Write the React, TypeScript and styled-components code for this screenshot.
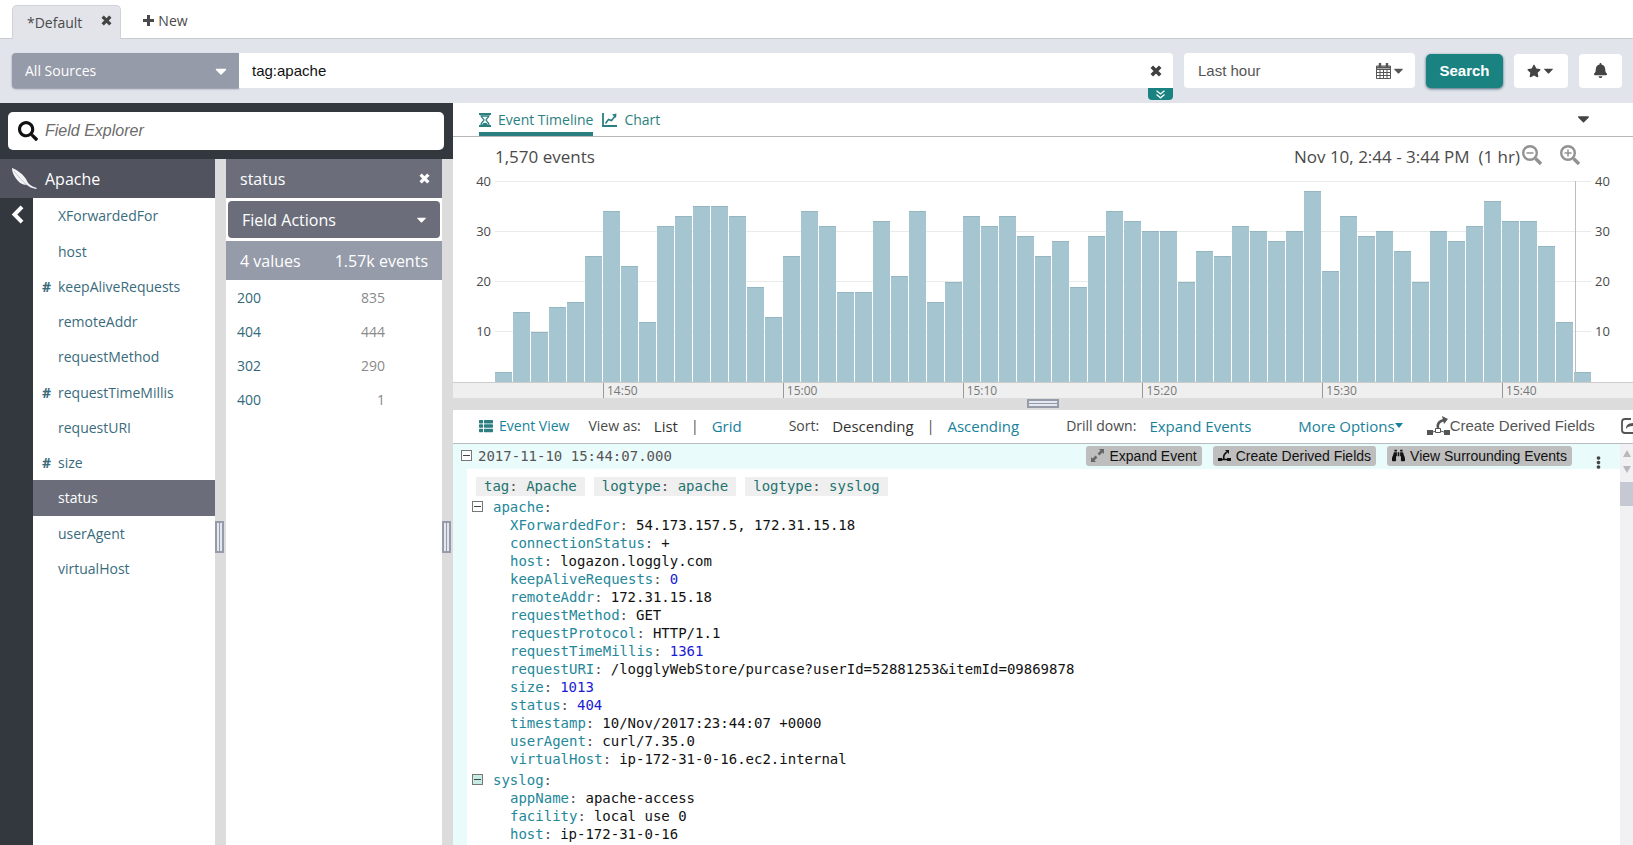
import React from "react";
import styled, { createGlobalStyle, css } from "styled-components";
import {
  FaCaretDown, FaSearch, FaStar, FaBell, FaThList, FaBinoculars, FaEllipsisV,
} from "react-icons/fa";

const Global = createGlobalStyle`
  *, *::before, *::after { box-sizing: border-box; }
  html, body, #root { height: 100%; }
  body { margin: 0; background: #fff; overflow: hidden; }
  body, button, input, select { font-family: "Open Sans", "Noto Sans", sans-serif; font-size: 14px; color: #4a4a4a; }
  button, input, select { margin: 0; padding: 0; border: 0; background: none; }
  ul, dl, dd, h2 { margin: 0; padding: 0; list-style: none; font-weight: 400; }
  a { text-decoration: none; color: inherit; }
  svg { display: block; flex: none; }
`;

const helv = css`font-family: "Liberation Sans", Arial, sans-serif;`;
const mono = css`font-family: "DejaVu Sans Mono", monospace;`;

const Page = styled.div`display: flex; flex-direction: column; height: 100vh; overflow: hidden;`;

/* Tabs and search bar */
const TabBar = styled.nav`
  display: flex; align-items: flex-end; height: 39px; flex: none; padding-left: 12px; gap: 22px; border-bottom: 1px solid #c9cbcf;
`;
const Tab = styled.div`
  display: flex; align-items: center; gap: 19px; height: 34px; margin-bottom: -1px; padding: 0 8px 0 14px;
  background: #e2e4ea; border: 1px solid #d0d2d8; border-bottom: 0; border-radius: 5px 5px 0 0;
`;
const TabClose = styled.button`padding-bottom: 4px; color: #444;`;
const NewTab = styled.button`display: flex; align-items: center; gap: 4px; height: 34px; padding-bottom: 2px;`;

const SearchBar = styled.form`
  display: flex; align-items: center; height: 64px; flex: none; padding: 0 11px 1px 12px; background: #e1e4eb;
`;
const SourceWrap = styled.div`display: flex; align-items: center; position: relative; width: 227px; height: 35px; flex: none; color: #fff;`;
const SourceSelect = styled.select`
  appearance: none; width: 100%; height: 100%; padding: 0 13px; color: #fff; background: #959ba8;
  border-radius: 4px 0 0 4px; box-shadow: 0 1px 2px #8a8f9b;
`;
const SelectCaret = styled.span`position: absolute; right: 9px; font-size: 18px; pointer-events: none;`;
const QueryBox = styled.div`
  position: relative; display: flex; align-items: center; flex: 1; height: 35px; padding-right: 11px; background: #fff; border-radius: 0 4px 0 0;
`;
const QueryInput = styled.input`${helv} flex: 1; height: 100%; padding-left: 13px; font-size: 15px; color: #111; outline: 0;`;
const ClearButton = styled.button`color: #3f3f3f;`;
const ExpandToggle = styled.button`
  position: absolute; right: 0; top: 100%; width: 25px; height: 12px; display: grid; place-items: center;
  background: #1a8280; border-radius: 0 0 4px 4px;
`;
const TimeRange = styled.button`
  ${helv} display: flex; align-items: center; width: 231px; height: 35px; margin-left: 11px; padding: 0 9px 0 14px;
  background: #fff; border-radius: 4px; font-size: 15px; color: #555;
`;
const Grow = styled.span`flex: 1; text-align: left;`;
const SearchButton = styled.button`
  ${helv} width: 77px; height: 34px; margin-left: 11px; border-radius: 5px; background: #1a8280; color: #fff;
  font-size: 15px; font-weight: 700; box-shadow: 0 1px 3px #467;
`;
const IconButton = styled.button<{ $w: number }>`
  display: flex; align-items: center; justify-content: center; width: ${(p) => p.$w}px; height: 34px;
  margin-left: 11px; border-radius: 4px; background: #fff; color: #444;
`;

/* Left: field explorer */
const Main = styled.div`display: flex; flex: 1; min-height: 0;`;
const Explorer = styled.aside`display: flex; flex-direction: column; width: 453px; flex: none; background: #dcdcdc;`;
const ExplorerTop = styled.div`height: 56px; flex: none; padding: 9px 9px 9px 8px; background: #33373e;`;
const ExplorerSearch = styled.label`
  display: flex; align-items: center; gap: 7px; height: 38px; padding-left: 10px; background: #fff; border-radius: 5px; color: #111; font-size: 20px;
`;
const ExplorerInput = styled.input`${helv} flex: 1; font-size: 16px; font-style: italic; outline: 0; &::placeholder { color: #6c6c6c; }`;
const Columns = styled.div`display: flex; flex: 1; min-height: 0;`;
const FieldColumn = styled.div`display: flex; flex-direction: column; width: 215px;`;
const GroupTitle = styled.h2<{ $bg: string; $pad: string }>`
  display: flex; align-items: center; justify-content: space-between; height: 39px; flex: none;
  padding: ${(p) => p.$pad}; background: ${(p) => p.$bg}; color: #fff; font-size: 16px; line-height: 22px;
`;
const GroupName = styled.span`display: flex; align-items: center; gap: 7px;`;
const CloseButton = styled.button`color: #fff;`;
const FieldBody = styled.div`display: flex; flex: 1; background: #fff;`;
const Rail = styled.div`width: 33px; padding: 7px 0 0 11px; background: #33373e;`;
const BackButton = styled.button`color: #fff;`;
const FieldList = styled.ul`flex: 1;`;
const FieldItem = styled.li<{ $on?: boolean }>`
  height: 35px; background: ${(p) => (p.$on ? "#6b6e7a" : "none")}; color: ${(p) => (p.$on ? "#fff" : "#3a6b7c")};
  &:nth-child(4n + 1) { height: 36px; }
`;
const FieldLink = styled.a`display: flex; align-items: center; height: 100%; line-height: 20px;`;
const Hash = styled.span`width: 25px; padding-left: 9px; font-weight: 700;`;
const VSplit = styled.div`display: flex; flex-direction: column; justify-content: center; width: 11px; padding-top: 70px;`;
const Grip = styled.span<{ $flat?: boolean }>`
  width: ${(p) => (p.$flat ? 32 : 9)}px; height: ${(p) => (p.$flat ? 9 : 32)}px;
  border: 2px solid #959ba8; background: #e4e7f0;
  display: grid; place-items: center;
  &::after { content: ""; background: #959ba8; ${(p) => (p.$flat ? "width: 100%; height: 1px;" : "width: 1px; height: 28px;")} }
`;
const ValueColumn = styled.div`width: 216px; display: flex; flex-direction: column; background: #fff;`;
const ActionsButton = styled.button`
  display: flex; align-items: center; justify-content: space-between; height: 37px; flex: none; margin: 3px 2px;
  padding: 0 11px 0 14px; border-radius: 4px; background: #6b6e7a; color: #fff; font-size: 16px;
`;
const Summary = styled.div`
  display: flex; align-items: center; justify-content: space-between; height: 39px; flex: none; padding: 0 14px;
  background: #959ba8; color: #fff; font-size: 16px; white-space: nowrap;
`;
const ValueTable = styled.table`
  width: 100%; margin-top: 1px; border-collapse: collapse;
  td { height: 34px; padding: 0 57px 0 11px; color: #8a8a8a; text-align: right; line-height: 20px; }
  td:first-child { padding-right: 0; text-align: left; color: #33697c; }
`;

/* Right: chart and events */
const Content = styled.main`display: flex; flex-direction: column; flex: 1; min-width: 0;`;
const ViewTabs = styled.div`
  display: flex; align-items: stretch; height: 34px; flex: none; padding: 0 40px 0 26px; gap: 9px; border-bottom: 1px solid #b4b8bb;
`;
const ViewTab = styled.button<{ $on?: boolean }>`
  display: flex; align-items: center; gap: 7px; padding-top: 4px; color: #2b7f80; border-bottom: 4px solid ${(p) => (p.$on ? "#2b7f80" : "transparent")};
`;
const CollapseButton = styled.button`margin-left: auto; padding-bottom: 2px; color: #444; svg { font-size: 19px; }`;
const ChartHead = styled.div`
  display: flex; align-items: center; justify-content: space-between; height: 44px; flex: none; padding: 0 53px 6px 42px; font-size: 17px; color: #4a4a4a;
`;
const RangeInfo = styled.div`display: flex; align-items: center; gap: 18px;`;
const RangeText = styled.span`margin-right: -16px; white-space: pre;`;
const ZoomButton = styled.button`color: #929292; padding-bottom: 2px;`;
const ChartRow = styled.div`display: flex; height: 201px; flex: none;`;
const Axis = styled.div<{ $right?: boolean }>`
  display: flex; flex-direction: column; justify-content: space-between; width: 42px; height: 168px; margin-top: -9px;
  font-size: 13px; line-height: 18px; text-align: ${(p) => (p.$right ? "left" : "right")}; padding: ${(p) => (p.$right ? "0 0 0 4px" : "0 4px 0 0")};
`;
const Plot = styled.div`
  flex: 1; position: relative; display: grid; grid-template-columns: repeat(61, 1fr); column-gap: 1px; align-items: end;
  background: repeating-linear-gradient(to bottom, #e9ebeb 0 1px, #fff 1px 50px);
`;
const Bar = styled.div`background: #a5c5d1; border-top: 1px solid #94b6c0;`;
const NowLine = styled.div`position: absolute; top: 0; bottom: 0; right: 15px; width: 1px; background: #bdbdbd;`;
const TimeAxis = styled.div`
  display: grid; grid-template-columns: 108px repeat(5, 180fr) 89fr 42px; height: 16px; flex: none; padding-left: 42px;
  border-top: 1px solid #ccc; background: #efefef; font-size: 12px; line-height: 16px; color: #777;
`;
const Tick = styled.span`border-left: 1px solid #999; padding-left: 3px;`;
const HSplit = styled.div`display: flex; align-items: center; justify-content: center; height: 12px; flex: none; padding-bottom: 1px; background: #dcdcdc;`;
const EventBar = styled.div`
  display: flex; align-items: center; height: 34px; flex: none; padding: 0 0 2px 26px; border-bottom: 1px solid #b6bcc0; white-space: nowrap; overflow: hidden;
`;
const ViewTitle = styled.a`display: flex; align-items: center; gap: 6px; color: #17829a; svg { color: #2b7f80; }`;
const EventItem = styled.span<{ $ml: number }>`margin-left: ${(p) => p.$ml}px;`;
const EventLink = styled.a<{ $ml: number; $dark?: boolean }>`
  margin-left: ${(p) => p.$ml}px; font-size: 15px; color: ${(p) => (p.$dark ? "#333" : "#17829a")};
`;
const OptionsButton = styled.button`display: flex; align-items: center; margin-left: 47px; font-size: 15px; color: #17829a;`;
const DerivedButton = styled.button<{ $ml: number }>`${helv} display: flex; align-items: center; margin-left: ${(p) => p.$ml}px; font-size: 15px; color: #555;`;

const EventsArea = styled.div`display: flex; flex: 1; min-height: 0;`;
const Events = styled.section`flex: 1; min-width: 0; padding-left: 14px; background: #eafbfb; overflow: hidden;`;
const EventHead = styled.div`display: flex; align-items: center; height: 25px; gap: 6px; margin-left: -6px; padding: 0 14px 2px 0; ${mono}`;
const Stamp = styled.span`flex: 1; color: #555; font-size: 14px;`;
const ActionButton = styled.button`
  ${helv} display: flex; align-items: center; gap: 5px; height: 20px; margin-right: 5px; padding: 0 5px;
  background: #bebebe; border-radius: 3px; font-size: 14px; color: #111;
`;
const MenuButton = styled.button`display: grid; place-items: center; width: 16px; margin: 14px 0 0 7px; color: #444; svg { font-size: 13px; }`;
const EventBody = styled.div`height: 100%; padding: 6px 0 0 5px; background: #fff; ${mono} font-size: 14px; line-height: 18px;`;
const Tags = styled.div`display: flex; gap: 9px; padding: 2px 0 1px 4px;`;
const TagChip = styled.span`height: 19px; padding: 0 8px; background: #efefef; color: #24736f;`;
const GroupLine = styled.div`display: flex; align-items: center; gap: 10px; height: 19px; color: #24889a;`;
const ToggleButton = styled.button`width: 11px; height: 11px; flex: none;`;
const Fields = styled.dl`padding: 0 0 2px 38px;`;
const Field = styled.div`display: flex; gap: 8px; white-space: nowrap;`;
const Key = styled.dt`color: #24889a;`;
const Colon = styled.span`color: #555;`;
const Value = styled.dd<{ $num?: boolean }>`color: ${(p) => (p.$num ? "#1a1ad6" : "#111")};`;
const ScrollTrack = styled.div`
  display: flex; flex-direction: column; align-items: center; width: 13px; gap: 9px; padding-top: 6px; background: #f1f1f4;
`;
const Thumb = styled.div`width: 100%; height: 24px; background: #c6c9d3;`;

const bars = [2,14,10,15,16,25,34,23,12,31,33,35,35,33,19,13,25,34,31,18,18,32,21,34,16,20,33,31,33,29,25,28,19,29,34,32,30,30,20,26,25,31,30,28,30,38,22,33,29,30,26,20,30,28,31,36,32,32,27,12,2];
const ticks = ["14:50", "15:00", "15:10", "15:20", "15:30", "15:40"];
const levels = [40, 30, 20, 10];
const fields = ["XForwardedFor", "host", "#keepAliveRequests", "remoteAddr", "requestMethod", "#requestTimeMillis", "requestURI", "#size", "status", "userAgent", "virtualHost"];
const values = [["200", "835"], ["404", "444"], ["302", "290"], ["400", "1"]];
const apache: [string, string][] = [
  ["XForwardedFor", "54.173.157.5, 172.31.15.18"], ["connectionStatus", "+"], ["host", "logazon.loggly.com"],
  ["keepAliveRequests", "0"], ["remoteAddr", "172.31.15.18"], ["requestMethod", "GET"], ["requestProtocol", "HTTP/1.1"],
  ["requestTimeMillis", "1361"], ["requestURI", "/logglyWebStore/purcase?userId=52881253&itemId=09869878"],
  ["size", "1013"], ["status", "404"], ["timestamp", "10/Nov/2017:23:44:07 +0000"], ["userAgent", "curl/7.35.0"],
  ["virtualHost", "ip-172-31-0-16.ec2.internal"],
];
const syslog: [string, string][] = [["appName", "apache-access"], ["facility", "local use 0"], ["host", "ip-172-31-0-16"]];

const Cross = ({ size = 12 }: { size?: number }) => (
  <svg width={size} height={size} viewBox="0 0 12 12" fill="none" stroke="currentColor" strokeWidth="3.600"><path d="M1.800 1.800l8.400 8.400M10.200 1.800l-8.400 8.400" /></svg>
);
const Plus = () => (
  <svg width="11" height="11" viewBox="0 0 11 11" fill="none" stroke="currentColor" strokeWidth="3"><path d="M5.500 0v11M0 5.500h11" /></svg>
);
const Back = () => (
  <svg width="13" height="19" viewBox="0 0 13 19" fill="none" stroke="currentColor" strokeWidth="4"><path d="M11 1.800L3.500 9.500l7.500 7.700" /></svg>
);
const Minus = ({ tint }: { tint?: boolean }) => (
  <svg width="11" height="11" viewBox="0 0 11 11"><rect x=".5" y=".5" width="10" height="10" fill={tint ? "#c5ebe2" : "#fff"} stroke="#777" /><path d="M2 5.500h7" stroke="#444" /></svg>
);
const Feather = () => (
  <svg width="27" height="24" viewBox="0 0 27 24"><path d="M1 1C6 3 12 7 15 12c1 2 2 4 3 5 2 2 5 3 8 4l-1 1c-4-1-7-2-9-4-5 0-9-3-12-8C2 7 1 4 1 1Z" fill="#f4f4f8" /><path d="M3 4c4 5 8 10 13 14" stroke="#b5b7c2" strokeWidth=".8" fill="none" /></svg>
);
const Magnifier = ({ plus }: { plus?: boolean }) => (
  <svg width="20" height="20" viewBox="0 0 20 20" fill="none" stroke="currentColor"><circle cx="8" cy="8" r="6.800" strokeWidth="2.400" /><path d="M13.500 13.500l5.500 5.500" strokeWidth="3.400" /><path d={plus ? "M4.500 8h7M8 4.500v7" : "M4.500 8h7"} strokeWidth="1.500" /></svg>
);
const Hourglass = () => (
  <svg width="12" height="14" viewBox="0 0 12 14" fill="none" stroke="currentColor"><path d="M0 1h12M0 13h12" strokeWidth="2" /><path d="M2 2c0 3 3 4 3 5s-3 2-3 5M10 2c0 3-3 4-3 5s3 2 3 5M3 3h6" strokeWidth="1.300" /><path d="M3 12c1-3 5-3 6 0Z" fill="currentColor" stroke="none" /></svg>
);
const LineChart = () => (
  <svg width="15" height="14" viewBox="0 0 15 14" fill="none" stroke="currentColor"><path d="M1 0v13h14" strokeWidth="1.800" /><path d="M3.500 10.500l3-4 3 1 4-5" strokeWidth="1.600" /><path d="M10 1.500l4.500-1-.5 4.500Z" fill="currentColor" stroke="none" /></svg>
);
const Calendar = () => (
  <svg width="15" height="16" viewBox="0 0 15 16" fill="none" stroke="currentColor"><path d="M.5 3h14v12.500H.5ZM.5 6.500h14M.5 9.500h14M.5 12.500h14M4 6v9M7.500 6v9M11 6v9" /><path d="M1 4.500h13" strokeWidth="2" /><path d="M4 0v4M11 0v4" strokeWidth="2.400" /></svg>
);
const Chevrons = () => (
  <svg width="9" height="9" viewBox="0 0 9 9" fill="none" stroke="#fff" strokeWidth="1.300"><path d="M.5.800l4 3.200 4-3.200M.5 4.600l4 3.200 4-3.200" /></svg>
);
const Derive = () => (
  <svg width="23" height="20" viewBox="0 0 23 20"><path d="M0 14h6v5H0ZM17 14h6v5h-6Z" fill="currentColor" /><path d="M8.500 12.500h5v4h-5ZM6 16l2.500-1M13.500 15l3.500 1" fill="none" stroke="currentColor" /><path d="M11 12c-1-4 1-7 6-8" fill="none" stroke="currentColor" strokeWidth="2.600" /><path d="M15 0l6 3-4 5Z" fill="currentColor" /></svg>
);
const DeriveSmall = () => (
  <svg width="13" height="12" viewBox="0 0 13 12" fill="currentColor"><path d="M0 8h4v3H0ZM9 8h4v3H9Z" /><path d="M3 9.500h7M6 9C5 6 6 4 9 2" fill="none" stroke="currentColor" strokeWidth="1.600" /><path d="M7 0h4v4Z" /></svg>
);
const Expand = () => (
  <svg width="13" height="13" viewBox="0 0 13 13" fill="#666"><path d="M8 0h5v5ZM0 8v5h5Z" /><path d="M11 2L7.500 5.500M5.500 7.500L2 11" stroke="#666" strokeWidth="2.600" /></svg>
);
const Share = () => (
  <svg width="18" height="16" viewBox="0 0 18 16" fill="none" stroke="currentColor" strokeWidth="1.800"><path d="M10 1H4a3 3 0 0 0-3 3v8a3 3 0 0 0 3 3h8a3 3 0 0 0 3-3" /><path d="M5 11c0-4 2-6 8-6V2l5 5-5 4V8C9 8 6 9 5 11Z" fill="currentColor" stroke="none" /></svg>
);
const SmallCaret = () => (
  <svg width="8" height="5" viewBox="0 0 8 5"><path d="M0 0h8L4 5Z" fill="currentColor" /></svg>
);
const Arrow = ({ up }: { up?: boolean }) => (
  <svg width="8" height="7" viewBox="0 0 8 7"><path d={up ? "M4 0l4 7H0Z" : "M0 0h8L4 7Z"} fill="#b9b9bd" /></svg>
);

const Group = ({ name, rows, tint }: { name: string; rows: [string, string][]; tint?: boolean }) => (
  <>
    <GroupLine><ToggleButton aria-label={`Collapse ${name}`}><Minus tint={tint} /></ToggleButton><span>{name}<Colon>:</Colon></span></GroupLine>
    <Fields>
      {rows.map(([k, v]) => (
        <Field key={k}><Key>{k}<Colon>:</Colon></Key><Value $num={/^\d+$/.test(v)}>{v}</Value></Field>
      ))}
    </Fields>
  </>
);

export default function App() {
  return (
    <Page>
      <Global />
      <TabBar>
        <Tab>*Default<TabClose aria-label="Close tab"><Cross size={11} /></TabClose></Tab>
        <NewTab><Plus />New</NewTab>
      </TabBar>
      <SearchBar onSubmit={(e) => e.preventDefault()}>
        <SourceWrap>
          <SourceSelect aria-label="Sources"><option>All Sources</option></SourceSelect>
          <SelectCaret><FaCaretDown /></SelectCaret>
        </SourceWrap>
        <QueryBox>
          <QueryInput aria-label="Query" defaultValue="tag:apache" />
          <ClearButton type="button" aria-label="Clear"><Cross /></ClearButton>
          <ExpandToggle type="button" aria-label="Expand search"><Chevrons /></ExpandToggle>
        </QueryBox>
        <TimeRange type="button"><Grow>Last hour</Grow><Calendar /><FaCaretDown size={15} /></TimeRange>
        <SearchButton>Search</SearchButton>
        <IconButton type="button" $w={54} aria-label="Favorites"><FaStar size={14} /><FaCaretDown size={15} /></IconButton>
        <IconButton type="button" $w={43} aria-label="Alerts"><FaBell size={15} /></IconButton>
      </SearchBar>
      <Main>
        <Explorer>
          <ExplorerTop>
            <ExplorerSearch><FaSearch /><ExplorerInput aria-label="Field Explorer" placeholder="Field Explorer" /></ExplorerSearch>
          </ExplorerTop>
          <Columns>
            <FieldColumn>
              <GroupTitle $bg="#51535f" $pad="0 11px"><GroupName><Feather />Apache</GroupName></GroupTitle>
              <FieldBody>
                <Rail><BackButton aria-label="Back"><Back /></BackButton></Rail>
                <FieldList>
                  {fields.map((f) => (
                    <FieldItem key={f} $on={f === "status"}>
                      <FieldLink href="#"><Hash>{f[0] === "#" ? "#" : ""}</Hash>{f.replace("#", "")}</FieldLink>
                    </FieldItem>
                  ))}
                </FieldList>
              </FieldBody>
            </FieldColumn>
            <VSplit><Grip /></VSplit>
            <ValueColumn>
              <GroupTitle $bg="#6b6e7a" $pad="0 12px 0 14px">status<CloseButton aria-label="Close status"><Cross size={11} /></CloseButton></GroupTitle>
              <ActionsButton>Field Actions<FaCaretDown size={15} /></ActionsButton>
              <Summary><span>4 values</span><span>1.57k events</span></Summary>
              <ValueTable><tbody>{values.map(([a, b]) => <tr key={a}><td>{a}</td><td>{b}</td></tr>)}</tbody></ValueTable>
            </ValueColumn>
            <VSplit><Grip /></VSplit>
          </Columns>
        </Explorer>
        <Content>
          <ViewTabs>
            <ViewTab $on><Hourglass />Event Timeline</ViewTab>
            <ViewTab><LineChart />Chart</ViewTab>
            <CollapseButton aria-label="Collapse"><FaCaretDown /></CollapseButton>
          </ViewTabs>
          <ChartHead>
            <span>1,570 events</span>
            <RangeInfo>
              <RangeText>{"Nov 10, 2:44 - 3:44 PM  (1 hr)"}</RangeText>
              <ZoomButton aria-label="Zoom out"><Magnifier /></ZoomButton>
              <ZoomButton aria-label="Zoom in"><Magnifier plus /></ZoomButton>
            </RangeInfo>
          </ChartHead>
          <ChartRow>
            <Axis>{levels.map((n) => <span key={n}>{n}</span>)}</Axis>
            <Plot>{bars.map((v, i) => <Bar key={i} style={{ height: `${v * 2.5}%` }} />)}<NowLine /></Plot>
            <Axis $right>{levels.map((n) => <span key={n}>{n}</span>)}</Axis>
          </ChartRow>
          <TimeAxis><span />{ticks.map((t) => <Tick key={t}>{t}</Tick>)}</TimeAxis>
          <HSplit><Grip $flat /></HSplit>
          <EventBar>
            <ViewTitle href="#"><FaThList size={14} />Event View</ViewTitle>
            <EventItem $ml={19}>View as:</EventItem>
            <EventLink href="#" $dark $ml={13}>List</EventLink>
            <EventItem $ml={13}>|</EventItem>
            <EventLink href="#" $ml={13}>Grid</EventLink>
            <EventItem $ml={47}>Sort:</EventItem>
            <EventLink href="#" $dark $ml={13}>Descending</EventLink>
            <EventItem $ml={13}>|</EventItem>
            <EventLink href="#" $ml={13}>Ascending</EventLink>
            <EventItem $ml={47}>Drill down:</EventItem>
            <EventLink href="#" $ml={13}>Expand Events</EventLink>
            <OptionsButton>More Options<SmallCaret /></OptionsButton>
            <DerivedButton $ml={24}><Derive />Create Derived Fields</DerivedButton>
            <DerivedButton $ml={26} aria-label="Share"><Share /></DerivedButton>
          </EventBar>
          <EventsArea>
            <Events>
              <EventHead>
                <ToggleButton aria-label="Collapse event"><Minus /></ToggleButton>
                <Stamp>2017-11-10 15:44:07.000</Stamp>
                <ActionButton><Expand />Expand Event</ActionButton>
                <ActionButton><DeriveSmall />Create Derived Fields</ActionButton>
                <ActionButton><FaBinoculars size={13} />View Surrounding Events</ActionButton>
                <MenuButton aria-label="More"><FaEllipsisV /></MenuButton>
              </EventHead>
              <EventBody>
                <Tags><TagChip>tag<Colon>:</Colon> Apache</TagChip><TagChip>logtype<Colon>:</Colon> apache</TagChip><TagChip>logtype<Colon>:</Colon> syslog</TagChip></Tags>
                <Group name="apache" rows={apache} />
                <Group name="syslog" rows={syslog} tint />
              </EventBody>
            </Events>
            <ScrollTrack><Arrow up /><Arrow /><Thumb /></ScrollTrack>
          </EventsArea>
        </Content>
      </Main>
    </Page>
  );
}
